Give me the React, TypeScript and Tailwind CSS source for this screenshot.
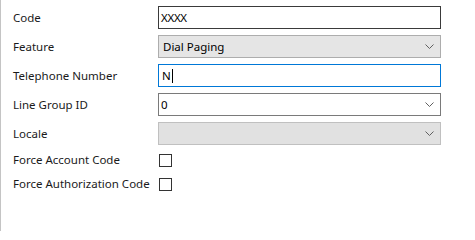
import React from "react";

const Chevron = () => (
  <svg width="9" height="5" viewBox="0 0 9 5" className="shrink-0">
    <path d="M0.5 0.5 L4.5 4.5 L8.5 0.5" fill="none" stroke="#606060" strokeWidth="1" />
  </svg>
);

const Label = ({ children }: { children: React.ReactNode }) => (
  <div className="w-[145px] shrink-0 text-[11.5px] text-[#1a1a1a] leading-none">{children}</div>
);

export default function App() {
  return (
    <div
      className="w-[475px] h-[231px] bg-white border-l border-[#c4c4c4] overflow-hidden"
      style={{ fontFamily: '"Noto Sans", "Open Sans", sans-serif' }}
    >
      <div className="pl-[12px] pt-[6px] flex flex-col">
        <div className="flex items-center h-[23px]">
          <Label>Code</Label>
          <div className="w-[283px] h-[23px] border border-[#3a3a3a] flex items-center px-[2px] text-[11.5px] text-black tracking-[-0.3px]">
            XXXX
          </div>
        </div>
        <div className="flex items-center h-[23px] mt-[6px]">
          <Label>Feature</Label>
          <div className="w-[283px] h-[23px] border border-[#adadad] bg-[#e5e5e5] flex items-center justify-between pl-[4px] pr-[6px] text-[11.5px] text-black">
            <span>Dial Paging</span>
            <Chevron />
          </div>
        </div>
        <div className="flex items-center h-[23px] mt-[6px]">
          <Label>Telephone Number</Label>
          <div className="w-[283px] h-[23px] border border-[#0078d7] flex items-center px-[3px] text-[11.5px] text-black">
            <span>N</span>
            <span className="w-px h-[14px] bg-black ml-px" />
          </div>
        </div>
        <div className="flex items-center h-[23px] mt-[6px]">
          <Label>Line Group ID</Label>
          <div className="w-[283px] h-[23px] border border-[#7a7a7a] bg-white flex items-center justify-between pl-[2px] pr-[6px] text-[11.5px] text-black">
            <span>0</span>
            <Chevron />
          </div>
        </div>
        <div className="flex items-center h-[23px] mt-[6px]">
          <Label>Locale</Label>
          <div className="w-[283px] h-[23px] border border-[#c0c0c0] bg-[#e1e1e1] flex items-center justify-end pr-[6px]">
            <Chevron />
          </div>
        </div>
        <div className="flex items-center h-[24px] mt-[3px]">
          <Label>Force Account Code</Label>
          <div className="ml-[1px] w-[13px] h-[13px] border border-[#333333] bg-white" />
        </div>
        <div className="flex items-center h-[24px]">
          <Label>Force Authorization Code</Label>
          <div className="ml-[1px] w-[13px] h-[13px] border border-[#333333] bg-white" />
        </div>
      </div>
    </div>
  );
}
